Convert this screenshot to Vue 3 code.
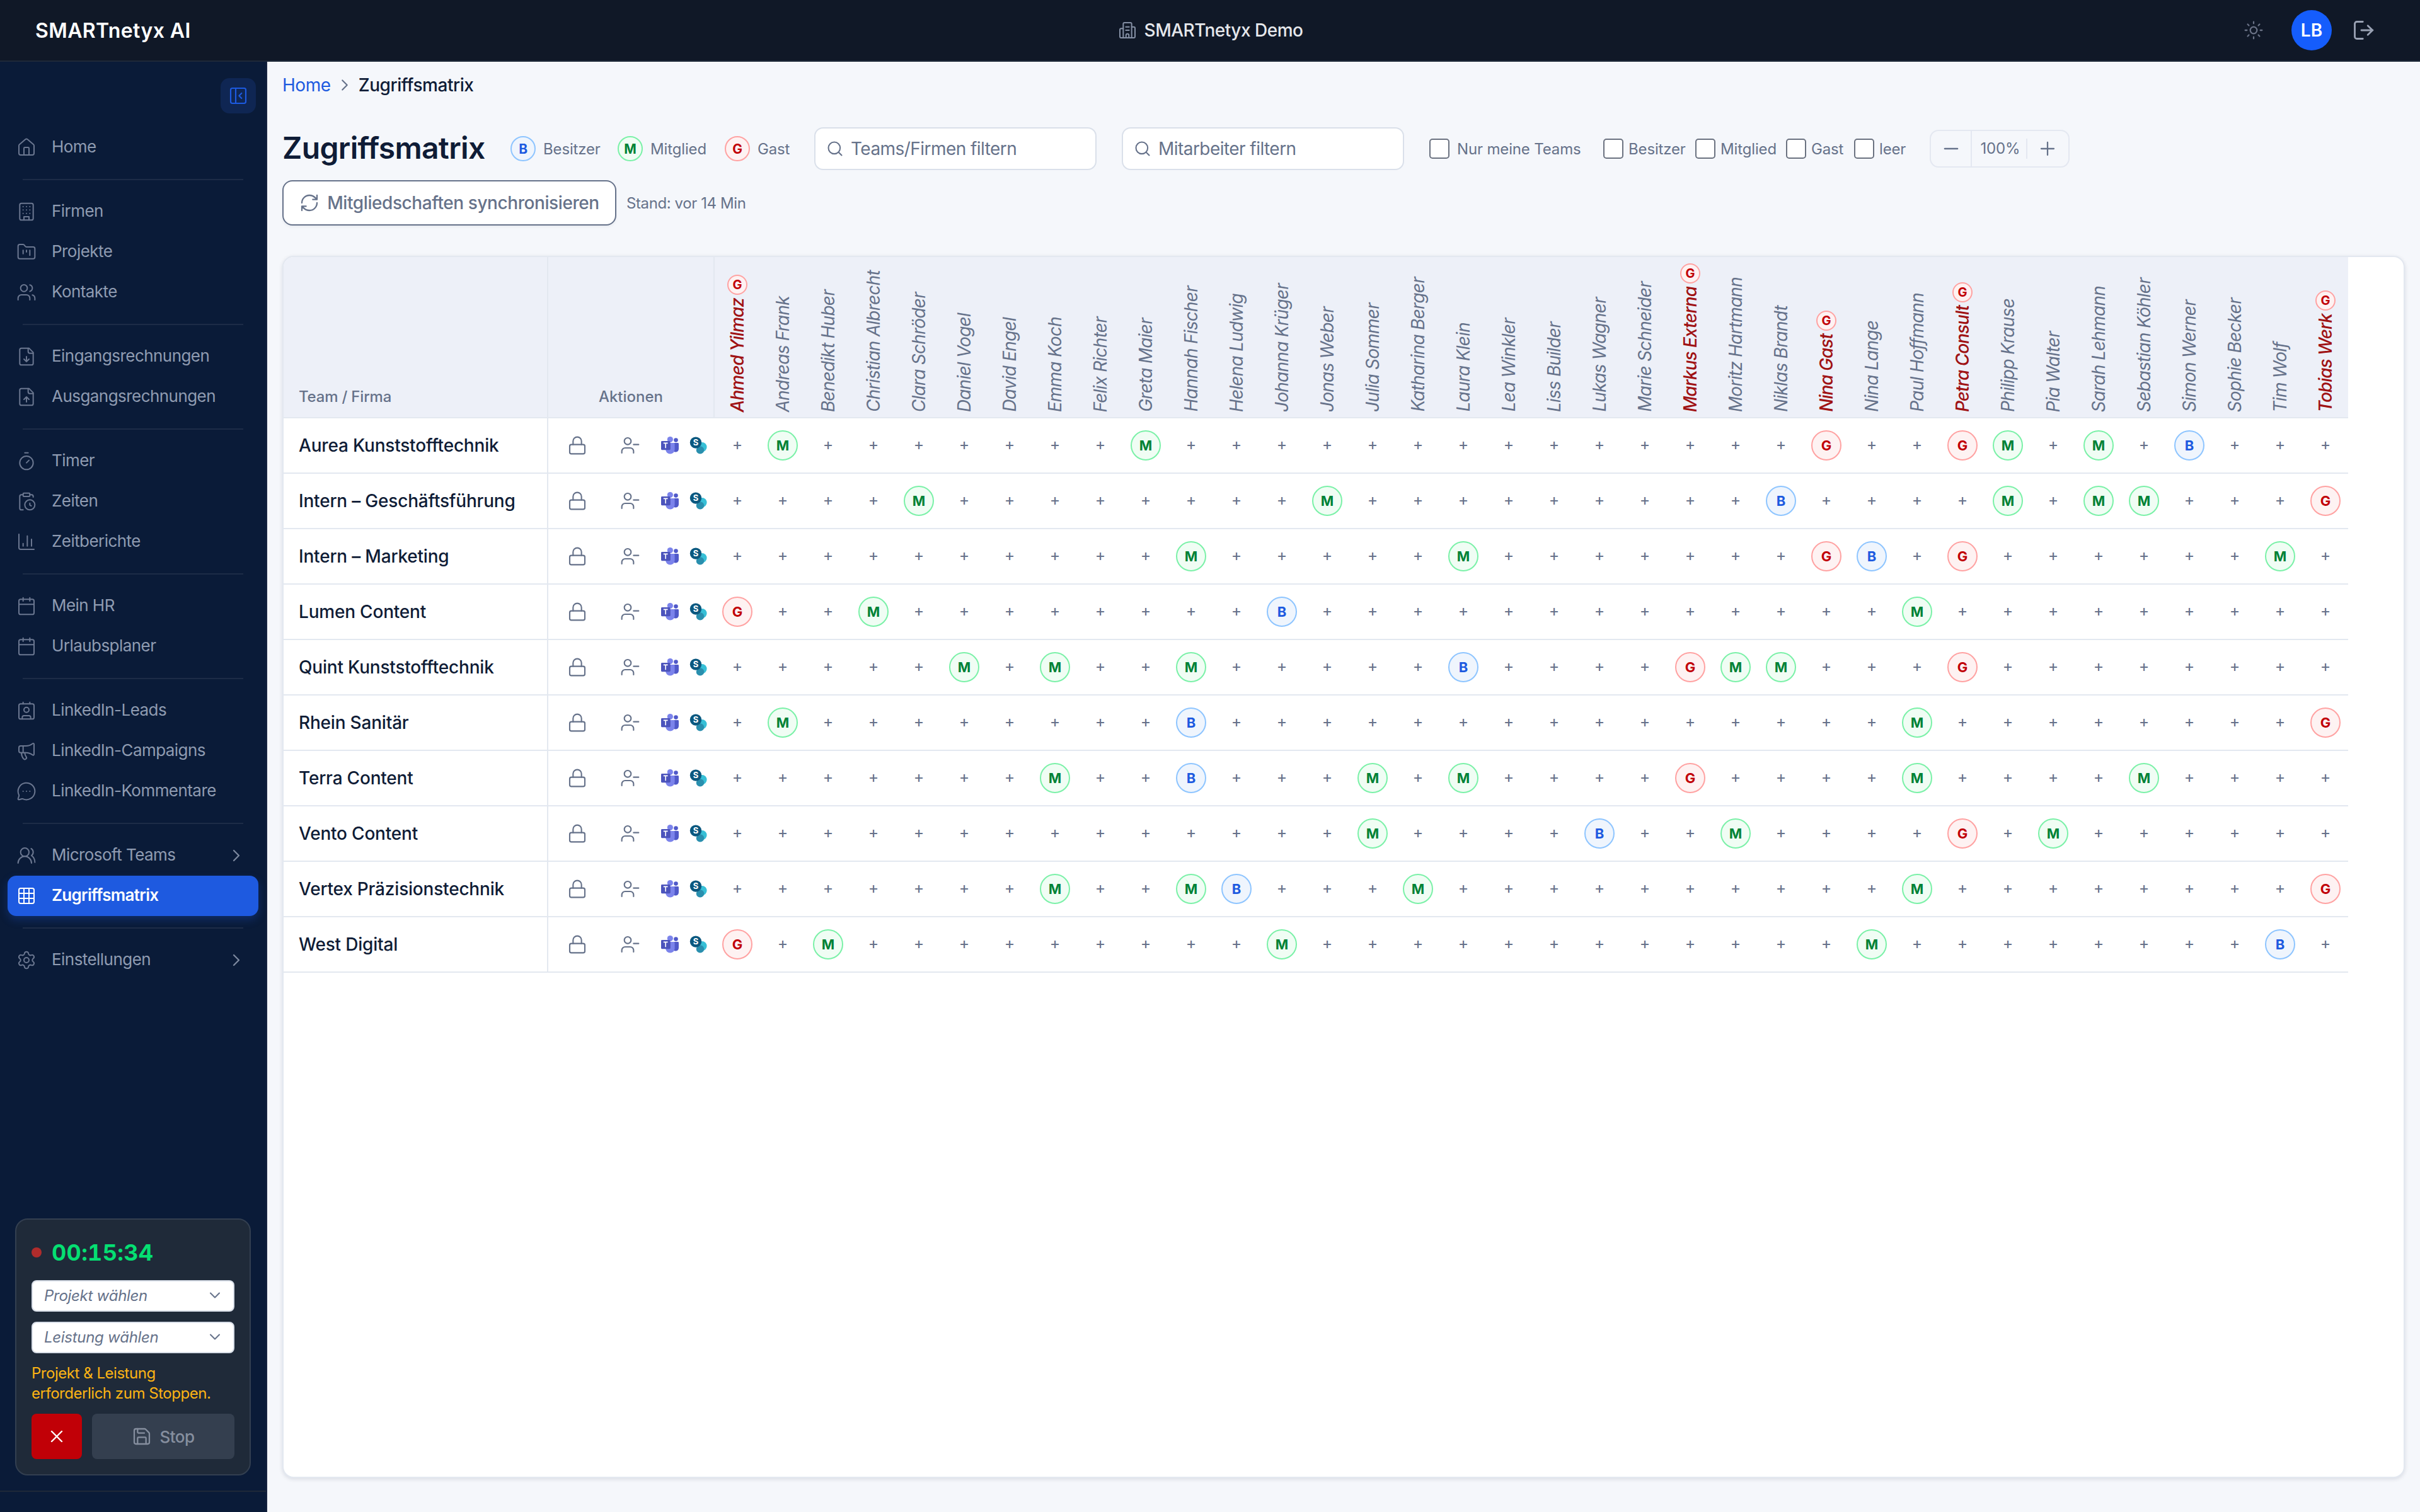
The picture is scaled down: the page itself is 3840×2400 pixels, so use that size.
<template>
  <div class="app">
    <header class="topbar">
      <div class="brand">SMARTnetyx AI</div>
      <div class="tenant">
        <Icon name="tenant" :size="32" :stroke="1.5" class="tenant-icon" />
        <span class="tenant-name">SMARTnetyx Demo</span>
      </div>
      <div class="topbar-actions">
        <Icon name="sun" :size="32" :stroke="1.7" class="theme-icon" />
        <div class="avatar">LB</div>
        <Icon name="logout" :size="36" :stroke="1.9" class="logout-icon" />
      </div>
    </header>

    <div class="body">
      <aside class="sidebar">
        <button class="collapse-btn">
          <Icon name="panel" :size="32" :stroke="1.6" />
        </button>

        <nav class="nav">
          <div v-for="(group, i) in navGroups" :key="i" class="nav-group">
            <a
              v-for="item in group"
              :key="item.label"
              :class="['nav-item', { active: item.active }]"
            >
              <Icon :name="item.icon" :size="32" :stroke="1.5" class="nav-icon" />
              <span class="nav-label">{{ item.label }}</span>
              <Icon v-if="item.expandable" name="chevronRight" :size="32" :stroke="1.7" class="nav-chevron" />
            </a>
          </div>
        </nav>

        <div class="timer-card">
          <div class="timer-head">
            <span class="timer-dot"></span>
            <span class="timer-value">00:15:34</span>
          </div>
          <div v-for="label in ['Projekt wählen', 'Leistung wählen']" :key="label" class="timer-select">
            <span>{{ label }}</span>
            <Icon name="chevronDown" :size="28" :stroke="1.8" />
          </div>
          <p class="timer-hint">Projekt &amp; Leistung<br />erforderlich zum Stoppen.</p>
          <div class="timer-buttons">
            <button class="btn-discard"><Icon name="x" :size="32" :stroke="1.8" /></button>
            <button class="btn-stop">
              <Icon name="save" :size="32" :stroke="1.7" />
              <span>Stop</span>
            </button>
          </div>
        </div>
        <div class="sidebar-foot"></div>
      </aside>

      <main class="content">
        <div class="breadcrumb">
          <a class="crumb-link">Home</a>
          <Icon name="chevronRight" :size="30" :stroke="1.7" class="crumb-sep" />
          <span class="crumb-current">Zugriffsmatrix</span>
        </div>

        <div class="toolbar">
          <h1 class="title">Zugriffsmatrix</h1>

          <div class="legend">
            <div v-for="role in roles" :key="role.key" class="legend-item">
              <span :class="['role', 'role-legend', role.key]">{{ role.key }}</span>
              <span>{{ role.label }}</span>
            </div>
          </div>

          <label class="search">
            <Icon name="search" :size="28" :stroke="1.8" />
            <span>Teams/Firmen filtern</span>
          </label>
          <label class="search">
            <Icon name="search" :size="28" :stroke="1.8" />
            <span>Mitarbeiter filtern</span>
          </label>

          <label class="check own"><i class="box"></i><span>Nur meine Teams</span></label>
          <div class="checks">
            <label v-for="f in ['Besitzer', 'Mitglied', 'Gast', 'leer']" :key="f" class="check">
              <i class="box"></i><span>{{ f }}</span>
            </label>
          </div>

          <div class="zoom">
            <span class="zoom-btn zoom-out"><Icon name="minus" :size="32" :stroke="2" /></span>
            <span class="zoom-value">100%</span>
            <span class="zoom-btn"><Icon name="plus" :size="32" :stroke="1.7" /></span>
          </div>
        </div>

        <div class="sync-row">
          <button class="sync-btn">
            <Icon name="refresh" :size="32" :stroke="1.7" />
            <span>Mitgliedschaften synchronisieren</span>
          </button>
          <span class="sync-state">Stand: vor 14 Min</span>
        </div>

        <section class="matrix-card">
          <table class="matrix">
            <thead>
              <tr>
                <th class="col-team">Team / Firma</th>
                <th class="col-actions">Aktionen</th>
                <th v-for="p in people" :key="p.name" class="col-person">
                  <div :class="['person', { guest: p.guest }]">
                    <span v-if="p.guest" class="role role-small G">G</span>
                    <span class="person-name">{{ p.name }}</span>
                  </div>
                </th>
              </tr>
            </thead>
            <tbody>
              <tr v-for="team in teams" :key="team.name">
                <td class="col-team">{{ team.name }}</td>
                <td class="col-actions">
                  <div class="actions">
                    <Icon name="lock" :size="32" :stroke="1.6" class="act-lock" />
                    <Icon name="userMinus" :size="32" :stroke="1.6" class="act-user" />
                    <svg class="act-teams" viewBox="0 0 28 28">
                      <circle cx="23.5" cy="5.6" r="3.3" fill="#5059c9" />
                      <path d="M18 10h8.6c.8 0 1.4.6 1.4 1.4v8.2a5 5 0 0 1-5 5h-1.2a5 5 0 0 1-3.8-5z" fill="#5059c9" />
                      <circle cx="14.4" cy="4.6" r="4.6" fill="#7b83eb" />
                      <path d="M8 10h12.2c.8 0 1.4.6 1.4 1.4v9a7.2 7.2 0 0 1-14.4 0v-9.6z" fill="#7b83eb" />
                      <path d="M8 10h7v10.4H7.2v-9.6z" fill="#5a62c3" />
                      <rect x="0" y="7" width="14.4" height="14.2" rx="1.4" fill="#4b53bc" />
                      <path d="M3.8 10.4h6.8M7.2 10.4v7.8" stroke="#fff" stroke-width="1.6" fill="none" />
                    </svg>
                    <svg class="act-sharepoint" viewBox="0 0 28 28">
                      <circle cx="20" cy="16.6" r="7.6" fill="#37bfd6" />
                      <circle cx="17" cy="21.4" r="6.2" fill="#2a8fae" />
                      <circle cx="10" cy="9.6" r="9.2" fill="#0b587f" />
                      <text x="10" y="14.4" text-anchor="middle">S</text>
                    </svg>
                  </div>
                </td>
                <td v-for="(p, i) in people" :key="p.name" class="cell">
                  <span v-if="team.members[i]" :class="['role', team.members[i]]">{{ team.members[i] }}</span>
                  <span v-else class="add">+</span>
                </td>
              </tr>
            </tbody>
          </table>
        </section>
      </main>
    </div>
  </div>
</template>

<script setup>
import { h } from 'vue'

// 24x24 outline icons
const icons = {
  tenant: '<path d="M7 21V4.5A1.5 1.5 0 0 1 8.500 3h7A1.500 1.500 0 0 1 17 4.500V21"/><path d="M7 10H4.500A1.500 1.500 0 0 0 3 11.500v8A1.500 1.500 0 0 0 4.500 21h15a1.500 1.500 0 0 0 1.500-1.500V9.500A1.500 1.500 0 0 0 19.500 8H17"/><path d="M10 8h4M10 12h4M10.300 21v-3a1.700 1.700 0 0 1 3.400 0v3"/>',
  sun: '<circle cx="12" cy="12" r="4"/><path d="M12 2v2M12 20v2M4.930 4.930l1.410 1.410M17.660 17.660l1.410 1.410M2 12h2M20 12h2M6.340 17.660l-1.410 1.410M19.070 4.930l-1.410 1.410"/>',
  logout: '<path d="M11.500 3H5.200C4 3 3 4 3 5.200v13.600C3 20 4 21 5.200 21h6.300"/><path d="M10 12h12M16.800 7.200 21.800 12l-5 4.800"/>',
  panel: '<rect width="18" height="18" x="3" y="3" rx="2"/><path d="M9 3v18M16 15l-3-3 3-3"/>',
  home: '<path d="M15 21v-8a1 1 0 0 0-1-1h-4a1 1 0 0 0-1 1v8"/><path d="M3 10a2 2 0 0 1 .709-1.528l7-5.999a2 2 0 0 1 2.582 0l7 5.999A2 2 0 0 1 21 10v9a2 2 0 0 1-2 2H5a2 2 0 0 1-2-2z"/>',
  building: '<rect width="16" height="20" x="4" y="2" rx="2"/><path d="M9 22v-4h6v4M8 6h.01M16 6h.01M12 6h.01M12 10h.01M12 14h.01M16 10h.01M16 14h.01M8 10h.01M8 14h.01"/>',
  folder: '<path d="M4 20h16a2 2 0 0 0 2-2V8a2 2 0 0 0-2-2h-7.930a2 2 0 0 1-1.660-.9l-.820-1.200A2 2 0 0 0 7.930 3H4a2 2 0 0 0-2 2v13c0 1.100.9 2 2 2Z"/><path d="M8 10v4M12 10v2M16 10v6"/>',
  users: '<path d="M16 21v-2a4 4 0 0 0-4-4H6a4 4 0 0 0-4 4v2"/><circle cx="9" cy="7" r="4"/><path d="M22 21v-2a4 4 0 0 0-3-3.870M16 3.130a4 4 0 0 1 0 7.750"/>',
  fileDown: '<path d="M15 2H6a2 2 0 0 0-2 2v16a2 2 0 0 0 2 2h12a2 2 0 0 0 2-2V7Z"/><path d="M14 2v4a2 2 0 0 0 2 2h4M12 18v-6M9 15l3 3 3-3"/>',
  fileUp: '<path d="M15 2H6a2 2 0 0 0-2 2v16a2 2 0 0 0 2 2h12a2 2 0 0 0 2-2V7Z"/><path d="M14 2v4a2 2 0 0 0 2 2h4M12 12v6M15 15l-3-3-3 3"/>',
  timer: '<path d="M10 2h4M12 14l3-3"/><circle cx="12" cy="14" r="8"/>',
  clipboard: '<path d="M16 14v2.200l1.600 1M16 4h2a2 2 0 0 1 2 2v.832M8 4H6a2 2 0 0 0-2 2v14a2 2 0 0 0 2 2h2"/><circle cx="16" cy="16" r="6"/><rect x="8" y="2" width="8" height="4" rx="1"/>',
  chart: '<path d="M3 3v16a2 2 0 0 0 2 2h16M18 17V9M13 17V5M8 17v-3"/>',
  calendar: '<path d="M8 2v4M16 2v4M3 10h18"/><rect width="18" height="18" x="3" y="4" rx="2"/>',
  contact: '<path d="M16 2v2M7 22v-2a2 2 0 0 1 2-2h6a2 2 0 0 1 2 2v2M8 2v2"/><circle cx="12" cy="11" r="3"/><rect x="3" y="4" width="18" height="18" rx="2"/>',
  megaphone: '<path d="M11 6a13 13 0 0 0 8.400-2.800A1 1 0 0 1 21 4v12a1 1 0 0 1-1.600.8A13 13 0 0 0 11 14H5a2 2 0 0 1-2-2V8a2 2 0 0 1 2-2z"/><path d="M6 14a12 12 0 0 0 2.400 7.200 2 2 0 0 0 3.200-2.400A8 8 0 0 1 10 14M8 6v8"/>',
  message: '<path d="M2.992 16.342a2 2 0 0 1 .094 1.167l-1.065 3.290a1 1 0 0 0 1.236 1.168l3.413-.998a2 2 0 0 1 1.099.092 10 10 0 1 0-4.777-4.719M8 12h.01M12 12h.01M16 12h.01"/>',
  usersRound: '<path d="M18 21a8 8 0 0 0-16 0"/><circle cx="10" cy="8" r="5"/><path d="M22 20c0-3.370-2-6.500-4-8a5 5 0 0 0-.450-8.300"/>',
  grid: '<rect width="18" height="18" x="3" y="3" rx="2"/><path d="M3 9h18M3 15h18M9 3v18M15 3v18"/>',
  gear: '<path d="M9.671 4.136a2.340 2.340 0 0 1 4.659 0 2.340 2.340 0 0 0 3.319 1.915 2.340 2.340 0 0 1 2.330 4.033 2.340 2.340 0 0 0 0 3.831 2.340 2.340 0 0 1-2.330 4.033 2.340 2.340 0 0 0-3.319 1.915 2.340 2.340 0 0 1-4.659 0 2.340 2.340 0 0 0-3.320-1.915 2.340 2.340 0 0 1-2.330-4.033 2.340 2.340 0 0 0 0-3.831A2.340 2.340 0 0 1 6.350 6.051a2.340 2.340 0 0 0 3.319-1.915"/><circle cx="12" cy="12" r="3"/>',
  chevronRight: '<path d="m9 18 6-6-6-6"/>',
  chevronDown: '<path d="m6 9 6 6 6-6"/>',
  x: '<path d="M18 6 6 18M6 6l12 12"/>',
  save: '<path d="M15.200 3a2 2 0 0 1 1.400.6l3.800 3.800a2 2 0 0 1 .6 1.400V19a2 2 0 0 1-2 2H5a2 2 0 0 1-2-2V5a2 2 0 0 1 2-2z"/><path d="M17 21v-7a1 1 0 0 0-1-1H8a1 1 0 0 0-1 1v7M7 3v4a1 1 0 0 0 1 1h7"/>',
  search: '<circle cx="11" cy="11" r="8"/><path d="m21 21-4.300-4.300"/>',
  minus: '<path d="M4.500 12h15"/>',
  plus: '<path d="M4.500 12h15M12 4.500v15"/>',
  refresh: '<path d="M3 12a9 9 0 0 1 9-9 9.750 9.750 0 0 1 6.740 2.740L21 8M21 3v5h-5M21 12a9 9 0 0 1-9 9 9.750 9.750 0 0 1-6.740-2.740L3 16M8 16H3v5"/>',
  lock: '<rect width="18" height="11" x="3" y="11" rx="2"/><path d="M7 11V7a5 5 0 0 1 10 0v4"/>',
  userMinus: '<path d="M16 21v-2a4 4 0 0 0-4-4H6a4 4 0 0 0-4 4v2"/><circle cx="9" cy="7" r="4"/><path d="M22 11h-6"/>'
}

const Icon = (props) =>
  h('svg', {
    width: props.size,
    height: props.size,
    viewBox: '0 0 24 24',
    fill: 'none',
    stroke: 'currentColor',
    'stroke-width': props.stroke,
    'stroke-linecap': 'round',
    'stroke-linejoin': 'round',
    innerHTML: icons[props.name]
  })
Icon.props = ['name', 'size', 'stroke']

const navGroups = [
  [{ label: 'Home', icon: 'home' }],
  [
    { label: 'Firmen', icon: 'building' },
    { label: 'Projekte', icon: 'folder' },
    { label: 'Kontakte', icon: 'users' }
  ],
  [
    { label: 'Eingangsrechnungen', icon: 'fileDown' },
    { label: 'Ausgangsrechnungen', icon: 'fileUp' }
  ],
  [
    { label: 'Timer', icon: 'timer' },
    { label: 'Zeiten', icon: 'clipboard' },
    { label: 'Zeitberichte', icon: 'chart' }
  ],
  [
    { label: 'Mein HR', icon: 'calendar' },
    { label: 'Urlaubsplaner', icon: 'calendar' }
  ],
  [
    { label: 'LinkedIn-Leads', icon: 'contact' },
    { label: 'LinkedIn-Campaigns', icon: 'megaphone' },
    { label: 'LinkedIn-Kommentare', icon: 'message' }
  ],
  [
    { label: 'Microsoft Teams', icon: 'usersRound', expandable: true },
    { label: 'Zugriffsmatrix', icon: 'grid', active: true }
  ],
  [{ label: 'Einstellungen', icon: 'gear', expandable: true }]
]

const roles = [
  { key: 'B', label: 'Besitzer' },
  { key: 'M', label: 'Mitglied' },
  { key: 'G', label: 'Gast' }
]

const guests = ['Ahmed Yilmaz', 'Markus Externa', 'Nina Gast', 'Petra Consult', 'Tobias Werk']

const people = [
  'Ahmed Yilmaz', 'Andreas Frank', 'Benedikt Huber', 'Christian Albrecht', 'Clara Schröder',
  'Daniel Vogel', 'David Engel', 'Emma Koch', 'Felix Richter', 'Greta Maier', 'Hannah Fischer',
  'Helena Ludwig', 'Johanna Krüger', 'Jonas Weber', 'Julia Sommer', 'Katharina Berger',
  'Laura Klein', 'Lea Winkler', 'Liss Builder', 'Lukas Wagner', 'Marie Schneider',
  'Markus Externa', 'Moritz Hartmann', 'Niklas Brandt', 'Nina Gast', 'Nina Lange',
  'Paul Hoffmann', 'Petra Consult', 'Philipp Krause', 'Pia Walter', 'Sarah Lehmann',
  'Sebastian Köhler', 'Simon Werner', 'Sophie Becker', 'Tim Wolf', 'Tobias Werk'
].map((name) => ({ name, guest: guests.includes(name) }))

// members: column index -> role
const teams = [
  { name: 'Aurea Kunststofftechnik', members: { 1: 'M', 9: 'M', 24: 'G', 27: 'G', 28: 'M', 30: 'M', 32: 'B' } },
  { name: 'Intern – Geschäftsführung', members: { 4: 'M', 13: 'M', 23: 'B', 28: 'M', 30: 'M', 31: 'M', 35: 'G' } },
  { name: 'Intern – Marketing', members: { 10: 'M', 16: 'M', 24: 'G', 25: 'B', 27: 'G', 34: 'M' } },
  { name: 'Lumen Content', members: { 0: 'G', 3: 'M', 12: 'B', 26: 'M' } },
  { name: 'Quint Kunststofftechnik', members: { 5: 'M', 7: 'M', 10: 'M', 16: 'B', 21: 'G', 22: 'M', 23: 'M', 27: 'G' } },
  { name: 'Rhein Sanitär', members: { 1: 'M', 10: 'B', 26: 'M', 35: 'G' } },
  { name: 'Terra Content', members: { 7: 'M', 10: 'B', 14: 'M', 16: 'M', 21: 'G', 26: 'M', 31: 'M' } },
  { name: 'Vento Content', members: { 14: 'M', 19: 'B', 22: 'M', 27: 'G', 29: 'M' } },
  { name: 'Vertex Präzisionstechnik', members: { 7: 'M', 10: 'M', 11: 'B', 15: 'M', 26: 'M', 35: 'G' } },
  { name: 'West Digital', members: { 0: 'G', 2: 'M', 12: 'M', 25: 'M', 34: 'B' } }
]
</script>

<style>
body {
  margin: 0;
  background: #f5f7fb;
}
</style>

<style scoped>
.app {
  width: 3840px;
  height: 2400px;
  display: flex;
  flex-direction: column;
  overflow: hidden;
  background: #f5f7fb;
  color: #0f1c36;
  font-family: Inter, 'Liberation Sans', sans-serif;
  font-size: 28px;
}

.app *,
.app {
  box-sizing: border-box;
}

svg {
  display: block;
  flex: none;
}

button {
  font: inherit;
  border: 0;
  padding: 0;
  display: flex;
  align-items: center;
  justify-content: center;
}

/* top bar */
.topbar {
  height: 98px;
  flex: none;
  display: grid;
  grid-template-columns: 1fr auto 1fr;
  align-items: center;
  padding: 0 56px;
  background: #101827;
  border-bottom: 2px solid #1e2939;
  color: #fff;
}

.brand {
  font-size: 32px;
  font-weight: 600;
  letter-spacing: 0.4px;
}

.tenant {
  display: flex;
  align-items: center;
  gap: 11px;
}

.tenant-icon {
  color: #8590a5;
}

.tenant-name {
  font-weight: 500;
  letter-spacing: -0.5px;
  color: #e5e7eb;
}

.topbar-actions {
  display: flex;
  justify-content: flex-end;
  align-items: center;
  padding-right: 16px;
}

.theme-icon {
  color: #6a7286;
}

.avatar {
  width: 64px;
  height: 64px;
  margin: 0 32px 0 44px;
  border-radius: 50%;
  background: #155dfc;
  display: flex;
  align-items: center;
  justify-content: center;
  font-weight: 600;
}

.logout-icon {
  color: #99a1b3;
}

.body {
  flex: 1;
  display: flex;
  min-height: 0;
}

/* sidebar */
.sidebar {
  width: 424px;
  flex: none;
  display: flex;
  flex-direction: column;
  background: #0a1b38;
  border-right: 2px solid #17233f;
}

.collapse-btn {
  width: 56px;
  height: 56px;
  margin: 26px 16px 22px auto;
  border-radius: 14px;
  background: #0f2653;
  color: #1d5ae0;
}

.nav-group + .nav-group::before {
  content: '';
  display: block;
  height: 2px;
  margin: 18px 24px;
  background: #1d2c47;
}

.nav {
  padding: 0 12px;
}

.nav-item {
  height: 64px;
  padding: 0 19px 0 14px;
  border-radius: 14px;
  display: flex;
  align-items: center;
  gap: 24px;
  font-size: 26px;
  letter-spacing: -0.55px;
  color: #8f9bb1;
}

.nav-icon {
  color: #6b7790;
}

.nav-label {
  flex: 1;
  padding-bottom: 3px;
}

.nav-chevron {
  color: #7d899f;
}

.nav-item.active {
  background: #1e5ae0;
  color: #fff;
  font-weight: 600;
  letter-spacing: -0.7px;
  box-shadow: 0 6px 14px rgba(30, 90, 224, 0.28);
}

.nav-item.active .nav-icon {
  color: #fff;
}

.timer-card {
  margin: auto 24px 24px;
  height: 408px;
  padding: 24px;
  border: 2px solid #333f50;
  border-radius: 20px;
  background: #1f2a39;
}

.timer-head {
  height: 56px;
  display: flex;
  align-items: center;
  gap: 16px;
}

.timer-dot {
  width: 16px;
  height: 16px;
  border-radius: 50%;
  background: #b02c2c;
}

.timer-value {
  font-size: 36px;
  font-weight: 700;
  font-variant-numeric: tabular-nums;
  letter-spacing: 0.3px;
  color: #05df72;
}

.timer-select {
  height: 50px;
  margin-top: 16px;
  padding: 0 15px 2px 18px;
  border: 2px solid #d8dee8;
  border-radius: 8px;
  background: #fff;
  display: flex;
  align-items: center;
  justify-content: space-between;
  font-size: 24px;
  font-style: italic;
  letter-spacing: -0.3px;
  color: #66728a;
}

.timer-hint {
  margin: 16px 0;
  font-size: 24px;
  line-height: 32px;
  letter-spacing: -0.47px;
  color: #fcb414;
}

.timer-buttons {
  display: flex;
  gap: 16px;
}

.timer-buttons button {
  height: 72px;
  border-radius: 8px;
}

.btn-discard {
  width: 80px;
  background: #c10007;
  color: #fff;
}

.btn-stop {
  flex: 1;
  gap: 12px;
  background: #343f4f;
  color: #868f9f;
  font-size: 26px;
  font-weight: 500;
  letter-spacing: -0.5px;
}

.sidebar-foot {
  height: 34px;
  border-top: 2px solid #1e2939;
}

/* content */
.content {
  flex: 1;
  min-width: 0;
  display: flex;
  flex-direction: column;
  padding: 20px 24px 54px;
}

.breadcrumb {
  height: 34px;
  display: flex;
  align-items: center;
  gap: 7px;
  letter-spacing: -0.45px;
  color: #1d5ae0;
}

.crumb-sep {
  color: #66728a;
}

.crumb-current {
  color: #0f1c36;
  font-weight: 500;
}

.toolbar {
  height: 68px;
  margin-top: 50px;
  display: flex;
  align-items: center;
  font-size: 24px;
  letter-spacing: -0.15px;
  white-space: nowrap;
  color: #66728a;
}

.title {
  width: 322px;
  margin: 0 40px 0 0;
  padding-bottom: 3px;
  font-size: 48px;
  font-weight: 600;
  letter-spacing: -0.65px;
  color: #0f1c36;
}

.legend {
  width: 442px;
  margin-right: 40px;
  display: grid;
  grid-template-columns: 170px 170px auto;
}

.legend-item {
  display: flex;
  align-items: center;
  gap: 12px;
}

.role {
  width: 48px;
  height: 48px;
  border: 2px solid;
  border-radius: 50%;
  display: inline-flex;
  align-items: center;
  justify-content: center;
  font-size: 22px;
  font-weight: 700;
}

.role-legend {
  width: 40px;
  height: 40px;
  font-size: 21px;
}

.role-small {
  width: 32px;
  height: 32px;
  font-size: 20px;
  letter-spacing: 0;
}

.role.B {
  background: #eff5fd;
  border-color: #8ec5ff;
  color: #1d5ae0;
}

.role.M {
  background: #f0fdf4;
  border-color: #7bf1a8;
  color: #008236;
}

.role.G {
  background: #fef2f2;
  border-color: #ffa2a2;
  color: #c10007;
}

.search {
  width: 448px;
  height: 68px;
  margin-right: 40px;
  padding: 0 17px;
  border: 2px solid #dae0ea;
  border-radius: 14px;
  background: #fff;
  display: flex;
  align-items: center;
  gap: 11px;
  font-size: 28px;
  letter-spacing: -0.55px;
}

.check {
  display: flex;
  align-items: center;
  gap: 8px;
}

.check.own {
  width: 236px;
  margin-right: 40px;
  gap: 12px;
}

.checks {
  width: 480px;
  display: grid;
  grid-template-columns: 146px 144px 108px auto;
  margin-right: 38px;
}

.box {
  width: 32px;
  height: 32px;
  flex: none;
  border: 2px solid #6b7280;
  border-radius: 5px;
  background: #fff;
}

.zoom {
  width: 222px;
  height: 60px;
  border: 2px solid #e4e8f1;
  border-radius: 14px;
  display: flex;
  align-items: center;
}

.zoom-btn {
  width: 66px;
  height: 100%;
  display: flex;
  align-items: center;
  justify-content: center;
}

.zoom-out {
  border-right: 2px solid #e4e8f1;
}

.zoom-value {
  width: 88px;
  height: 32px;
  padding-left: 4px;
  line-height: 32px;
  text-align: center;
  border-right: 2px solid #e4e8f1;
}

.sync-row {
  margin-top: 16px;
  display: flex;
  align-items: center;
  gap: 16px;
  color: #66728a;
}

.sync-btn {
  width: 530px;
  height: 72px;
  gap: 12px;
  border: 2px solid #66728a;
  border-radius: 16px;
  background: #fff;
  color: #66728a;
  font-weight: 500;
  letter-spacing: -0.42px;
  white-space: nowrap;
  box-shadow: 0 2px 4px rgba(15, 28, 54, 0.06);
}

.sync-state {
  font-size: 24px;
  letter-spacing: -0.4px;
}

/* matrix */
.matrix-card {
  flex: 1;
  margin-top: 48px;
  border: 2px solid #e3e8f0;
  border-radius: 18px;
  background: #fff;
  overflow: hidden;
  box-shadow: 0 2px 6px rgba(15, 28, 54, 0.12);
}

.matrix {
  width: 3276px;
  table-layout: fixed;
  border-collapse: separate;
  border-spacing: 0;
}

.matrix th {
  height: 256px;
  padding: 0;
  vertical-align: bottom;
  background: #edf0f8;
  border-bottom: 2px solid #e3e8f0;
  font-size: 24px;
  font-weight: 500;
  color: #66728a;
}

.matrix td {
  height: 88px;
  padding: 0;
  border-bottom: 2px solid #e3e8f0;
  text-align: center;
}

.matrix .col-team {
  width: 420px;
  padding-left: 24px;
  border-right: 2px solid #e3e8f0;
  text-align: left;
  font-weight: 500;
  letter-spacing: -0.2px;
}

.matrix .col-actions {
  width: 264px;
}

.matrix th.col-actions {
  border-right: 2px solid #e3e8f0;
}

.matrix th.col-team,
.matrix th.col-actions {
  padding-bottom: 18px;
}

.col-person {
  width: 72px;
}

.person {
  height: 254px;
  padding-bottom: 8px;
  display: flex;
  flex-direction: column;
  align-items: center;
  justify-content: flex-end;
  gap: 5px;
  font-size: 28px;
  line-height: 36px;
  font-weight: 400;
  letter-spacing: -0.75px;
}

.person-name {
  writing-mode: vertical-rl;
  transform: rotate(180deg);
  font-style: italic;
  white-space: nowrap;
}

.person.guest {
  color: #9f1214;
  font-weight: 500;
  letter-spacing: -1px;
}

.person .role-small {
  font-weight: 700;
  letter-spacing: 0;
}

.actions {
  display: flex;
  align-items: center;
  padding-left: 30px;
  color: #66728a;
}

.act-user {
  margin-left: 52px;
}

.act-teams {
  width: 28px;
  height: 28px;
  margin-left: 33px;
}

.act-sharepoint {
  width: 28px;
  height: 28px;
  margin-left: 17px;
}

.act-sharepoint text {
  font-size: 13px;
  font-weight: 700;
  fill: #fff;
}

.cell .role {
  vertical-align: middle;
}

.add {
  display: block;
  padding-bottom: 4px;
  font-size: 25px;
  line-height: 30px;
  color: #66728a;
}
</style>
